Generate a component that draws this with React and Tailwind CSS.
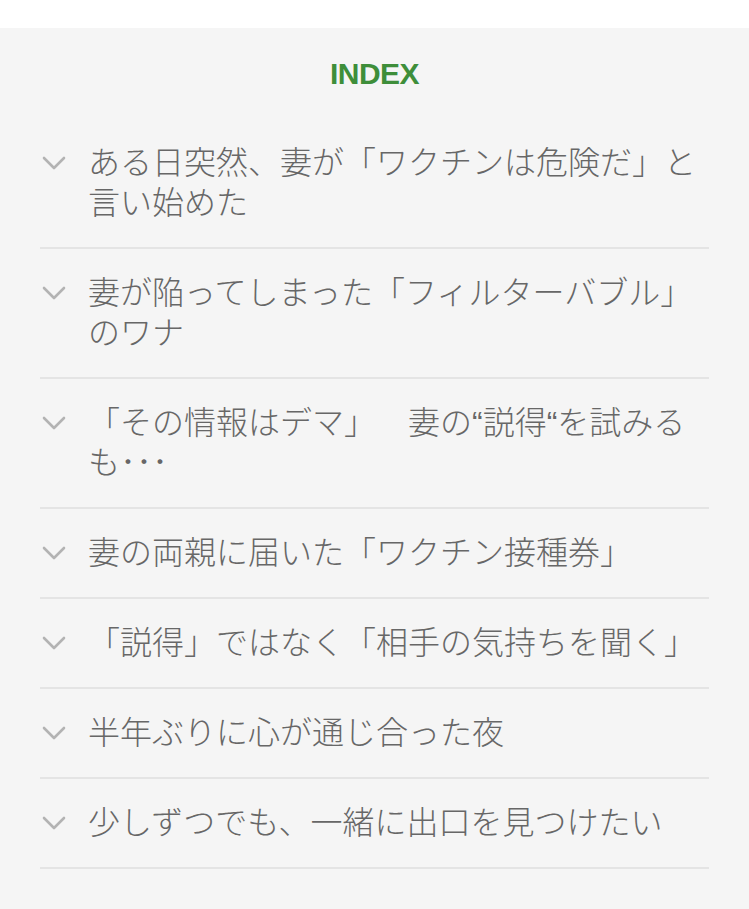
import React from 'react'

const items = [
  'ある日突然、妻が「ワクチンは危険だ」と言い始めた',
  '妻が陥ってしまった「フィルターバブル」のワナ',
  ['「その情報はデマ」', '妻の“説得“を試みるも･･･'],
  '妻の両親に届いた「ワクチン接種券」',
  '「説得」ではなく「相手の気持ちを聞く」',
  '半年ぶりに心が通じ合った夜',
  '少しずつでも、一緒に出口を見つけたい'
]

function Chevron() {
  return (
    <svg
      viewBox="0 0 24 14"
      className="w-[24px] h-[14px]"
      fill="none"
      stroke="#b3b3b3"
      strokeWidth="2.6"
      strokeLinecap="round"
      strokeLinejoin="round"
    >
      <path d="M2 2l10 10L22 2" />
    </svg>
  )
}

function Title({ value }) {
  if (!Array.isArray(value)) return value
  // two phrases joined by an ideographic space
  return (
    <>
      {value[0]}
      <span className="inline-block w-[32px]">{'\u3000'}</span>
      {value[1]}
    </>
  )
}

export default function App() {
  return (
    <div
      lang="ja"
      className="min-h-[909px] bg-white"
      style={{ fontFamily: '"Liberation Sans", "Noto Sans CJK JP", sans-serif' }}
    >
      <div className="h-[28px] bg-white" />

      {/* Table of contents */}
      <nav className="bg-[#f5f5f5] pt-[26px] pb-[40px] min-h-[881px]">
        <h2 className="text-center text-[30px] leading-[40px] font-bold text-[#3e8e3a] tracking-[-0.5px] mb-[25px]">
          INDEX
        </h2>
        <ul className="mx-10">
          {items.map((title, i) => (
            <li
              key={i}
              className="flex border-b-2 border-[#e4e4e4] pt-[24px] pb-[24px]"
            >
              <div className="w-[48px] shrink-0 pl-[2px] pt-[13px]">
                <Chevron />
              </div>
              <p className="flex-1 text-[32px] leading-[40px] font-light text-[#676767]">
                <Title value={title} />
              </p>
            </li>
          ))}
        </ul>
      </nav>
    </div>
  )
}
